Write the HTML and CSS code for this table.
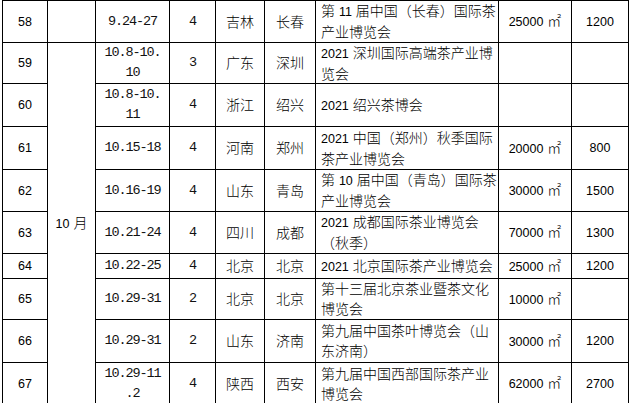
FILE: index.html
```html
<!DOCTYPE html>
<html lang="zh-CN">
<head>
<meta charset="utf-8">
<title>茶博会</title>
<link rel="stylesheet" href="styles.css">
</head>
<body>
<div class="sheet">
  <div class="c"><span class="t num">58</span></div>
  <div class="c"></div>
  <div class="c mono"><span class="t">9.24-27</span></div>
  <div class="c mono"><span class="t">4</span></div>
  <div class="c"><span class="t">吉林</span></div>
  <div class="c"><span class="t">长春</span></div>
  <div class="c name"><span class="t">第 <span class="num">11</span> 届中国（长春）国际茶<br>产业博览会</span></div>
  <div class="c"><span class="t"><span class="num">25000</span> ㎡</span></div>
  <div class="c"><span class="t num">1200</span></div>

  <div class="c"><span class="t num">59</span></div>
  <div class="c month"><span class="t"><span class="num">10</span> 月</span></div>
  <div class="c mono"><span class="t">10.8-10.<br>10</span></div>
  <div class="c mono"><span class="t">3</span></div>
  <div class="c"><span class="t">广东</span></div>
  <div class="c"><span class="t">深圳</span></div>
  <div class="c name"><span class="t"><span class="num">2021</span> 深圳国际高端茶产业博<br>览会</span></div>
  <div class="c"></div>
  <div class="c"></div>

  <div class="c"><span class="t num">60</span></div>
  <div class="c mono"><span class="t">10.8-10.<br>11</span></div>
  <div class="c mono"><span class="t">4</span></div>
  <div class="c"><span class="t">浙江</span></div>
  <div class="c"><span class="t">绍兴</span></div>
  <div class="c name"><span class="t"><span class="num">2021</span> 绍兴茶博会</span></div>
  <div class="c"></div>
  <div class="c"></div>

  <div class="c"><span class="t num">61</span></div>
  <div class="c mono"><span class="t">10.15-18</span></div>
  <div class="c mono"><span class="t">4</span></div>
  <div class="c"><span class="t">河南</span></div>
  <div class="c"><span class="t">郑州</span></div>
  <div class="c name"><span class="t"><span class="num">2021</span> 中国（郑州）秋季国际<br>茶产业博览会</span></div>
  <div class="c"><span class="t"><span class="num">20000</span> ㎡</span></div>
  <div class="c"><span class="t num">800</span></div>

  <div class="c"><span class="t num">62</span></div>
  <div class="c mono"><span class="t">10.16-19</span></div>
  <div class="c mono"><span class="t">4</span></div>
  <div class="c"><span class="t">山东</span></div>
  <div class="c"><span class="t">青岛</span></div>
  <div class="c name"><span class="t">第 <span class="num">10</span> 届中国（青岛）国际茶<br>产业博览会</span></div>
  <div class="c"><span class="t"><span class="num">30000</span> ㎡</span></div>
  <div class="c"><span class="t num">1500</span></div>

  <div class="c"><span class="t num">63</span></div>
  <div class="c mono"><span class="t">10.21-24</span></div>
  <div class="c mono"><span class="t">4</span></div>
  <div class="c"><span class="t">四川</span></div>
  <div class="c"><span class="t">成都</span></div>
  <div class="c name"><span class="t"><span class="num">2021</span> 成都国际茶业博览会<br>（秋季）</span></div>
  <div class="c"><span class="t"><span class="num">70000</span> ㎡</span></div>
  <div class="c"><span class="t num">1300</span></div>

  <div class="c"><span class="t num">64</span></div>
  <div class="c mono"><span class="t">10.22-25</span></div>
  <div class="c mono"><span class="t">4</span></div>
  <div class="c"><span class="t">北京</span></div>
  <div class="c"><span class="t">北京</span></div>
  <div class="c name"><span class="t"><span class="num">2021</span> 北京国际茶产业博览会</span></div>
  <div class="c"><span class="t"><span class="num">25000</span> ㎡</span></div>
  <div class="c"><span class="t num">1200</span></div>

  <div class="c"><span class="t num">65</span></div>
  <div class="c mono"><span class="t">10.29-31</span></div>
  <div class="c mono"><span class="t">2</span></div>
  <div class="c"><span class="t">北京</span></div>
  <div class="c"><span class="t">北京</span></div>
  <div class="c name"><span class="t">第十三届北京茶业暨茶文化<br>博览会</span></div>
  <div class="c"><span class="t"><span class="num">10000</span> ㎡</span></div>
  <div class="c"></div>

  <div class="c"><span class="t num">66</span></div>
  <div class="c mono"><span class="t">10.29-31</span></div>
  <div class="c mono"><span class="t">2</span></div>
  <div class="c"><span class="t">山东</span></div>
  <div class="c"><span class="t">济南</span></div>
  <div class="c name"><span class="t">第九届中国茶叶博览会（山<br>东济南）</span></div>
  <div class="c"><span class="t"><span class="num">30000</span> ㎡</span></div>
  <div class="c"><span class="t num">1200</span></div>

  <div class="c"><span class="t num">67</span></div>
  <div class="c mono"><span class="t">10.29-11<br>.2</span></div>
  <div class="c mono"><span class="t">4</span></div>
  <div class="c"><span class="t">陕西</span></div>
  <div class="c"><span class="t">西安</span></div>
  <div class="c name"><span class="t">第九届中国西部国际茶产业<br>博览会</span></div>
  <div class="c"><span class="t"><span class="num">62000</span> ㎡</span></div>
  <div class="c"><span class="t num">2700</span></div>
</div>
</body>
</html>
```

FILE: styles.css
```css
html, body {
  margin: 0;
  padding: 0;
  background: #fff;
  overflow: hidden;
}

.sheet {
  display: grid;
  grid-template-columns: 44px 47px 73px 45px 48px 50px 182px 72px 56px;
  grid-template-rows: 41px 40px 42px 42px 41px 41px 24px 40px 42px 41px;
  gap: 1px;
  padding: 1px;
  background: #000;
  width: max-content;
  margin-left: 2px;
}

.c {
  background: #fff;
  display: flex;
  align-items: center;
  justify-content: center;
  text-align: center;
  font-family: "Liberation Sans", "Noto Sans CJK SC", sans-serif;
  font-size: 14px;
  font-weight: 300;
  line-height: 20px;
  color: #000;
  white-space: nowrap;
}

.t {
  display: block;
}

.month {
  grid-column: 2;
  grid-row: 2 / span 9;
}

.name {
  justify-content: flex-start;
  text-align: left;
  padding-left: 5px;
}

.mono {
  font-family: "Liberation Mono", "Noto Sans CJK SC", monospace;
  font-weight: 400;
  font-size: 13.5px;
  letter-spacing: -1.1px;
  color: #111;
}

.num {
  font-size: 12.5px;
  font-weight: 400;
}
```
